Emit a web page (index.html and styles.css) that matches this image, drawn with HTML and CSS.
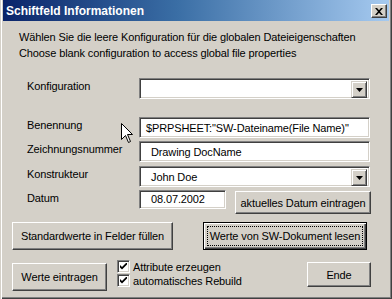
FILE: index.html
```html
<!DOCTYPE html>
<html lang="de">
<head>
<meta charset="utf-8">
<title>Schiftfeld Informationen</title>
<link rel="stylesheet" href="styles.css">
</head>
<body>
<div class="window">
  <div class="titlebar">
    <span class="title">Schiftfeld Informationen</span>
    <span class="close"><svg width="8" height="7" viewBox="0 0 8 7"><path d="M0 0h2l2 2.2L6 0h2L5 3.5 8 7H6L4 4.8 2 7H0l3-3.5z" fill="#000"/></svg></span>
  </div>
  <div class="content">
    <p class="intro">Wählen Sie die leere Konfiguration für die globalen Dateieigenschaften<br>Choose blank configuration to access global file properties</p>

    <div class="row row-konf">
      <span class="lbl">Konfiguration</span>
      <div class="field combo"><span class="val"></span><span class="ddbtn"><svg width="7" height="4" viewBox="0 0 7 4"><path d="M0 0h7L3.5 4z" fill="#000"/></svg></span></div>
    </div>

    <div class="row row-ben">
      <span class="lbl">Benennung</span>
      <div class="field text first">$PRPSHEET:"SW-Dateiname(File Name)"</div>
    </div>

    <div class="row row-zei">
      <span class="lbl">Zeichnungsnummer</span>
      <div class="field text">Drawing DocName</div>
    </div>

    <div class="row row-kon">
      <span class="lbl">Konstrukteur</span>
      <div class="field combo"><span class="val">John Doe</span><span class="ddbtn"><svg width="7" height="4" viewBox="0 0 7 4"><path d="M0 0h7L3.5 4z" fill="#000"/></svg></span></div>
    </div>

    <div class="row row-dat">
      <span class="lbl">Datum</span>
      <div class="field text date">08.07.2002</div>
      <button class="btn btn-date">aktuelles Datum eintragen</button>
    </div>

    <div class="btnrow1">
      <button class="btn btn-std">Standardwerte in Felder füllen</button>
      <div class="btn btn-default"><span class="focus">Werte von SW-Dokument lesen</span></div>
    </div>

    <div class="btnrow2">
      <button class="btn btn-werte">Werte eintragen</button>
      <div class="checks">
        <div class="chk"><span class="box"><svg width="7" height="7" viewBox="0 0 7 7"><path d="M0 2l2 2 5-5v2.5L2 6.5 0 4.5z" fill="#000"/></svg></span><span>Attribute erzeugen</span></div>
        <div class="chk"><span class="box"><svg width="7" height="7" viewBox="0 0 7 7"><path d="M0 2l2 2 5-5v2.5L2 6.5 0 4.5z" fill="#000"/></svg></span><span>automatisches Rebuild</span></div>
      </div>
      <button class="btn btn-ende">Ende</button>
    </div>
  </div>
  <svg class="cursor" width="13" height="21" viewBox="0 0 13 21"><path d="M0.5 0.5V16.5L4.5 12.5L7.5 19.5L9.5 18.5L6.5 11.5H11.5Z" fill="#fff" stroke="#000" stroke-width="1" stroke-linejoin="miter"/></svg>
</div>
</body>
</html>
```

FILE: styles.css
```css
* { box-sizing: border-box; }
html, body { margin: 0; padding: 0; background: #d4d0c8; }
body {
  font-family: "Liberation Sans", Arial, sans-serif;
  font-size: 11px;
  color: #000;
}
.window {
  position: relative;
  width: 392px;
  height: 299px;
  background: #d4d0c8;
  padding: 0 3px 3px 3px;
  box-shadow: inset 1px 0 #d4d0c8, inset 2px 0 #fff, inset -1px -1px #404040, inset -2px -2px #808080;
  overflow: hidden;
}
.titlebar {
  height: 21px;
  display: flex;
  align-items: center;
  justify-content: space-between;
  padding: 0 2px 0 3px;
  background: linear-gradient(to right, #0a246a, #3a6ea5 45%, #a6caf0);
}
.title {
  color: #fff;
  font-weight: bold;
  font-size: 12px;
  line-height: 21px;
  padding-top: 1px;
}
.close {
  width: 16px;
  height: 14px;
  margin-top: 1px;
  background: #d4d0c8;
  border: 1px solid;
  border-color: #fff #404040 #404040 #fff;
  box-shadow: inset -1px -1px #808080;
  display: flex;
  align-items: center;
  justify-content: center;
}
.content { letter-spacing: -0.12px; }
.intro {
  margin: 8px 0 0 16px;
  line-height: 16px;
}
.row {
  display: flex;
  align-items: flex-start;
  padding-left: 24px;
}
.lbl {
  width: 112px;
  line-height: 17px;
  flex: none;
}
.row-konf { margin-top: 17px; }
.row-ben { margin-top: 18px; }
.row-zei { margin-top: 3px; }
.row-kon { margin-top: 4px; }
.row-dat { margin-top: 3px; }
.field {
  width: 231px;
  height: 21px;
  background: #fff;
  border: 1px solid;
  border-color: #808080 #fff #fff #808080;
  box-shadow: inset 1px 1px #404040, inset -1px -1px #d4d0c8;
  flex: none;
}
.text {
  padding: 0 0 0 11px;
  line-height: 20px;
  white-space: nowrap;
  overflow: hidden;
}
.text.first { padding-left: 6px; }
.combo {
  display: flex;
  padding: 2px;
}
.combo .val {
  flex: 1;
  padding-left: 9px;
  line-height: 16px;
}
.ddbtn {
  width: 16px;
  height: 17px;
  background: #d4d0c8;
  border: 1px solid;
  border-color: #d4d0c8 #404040 #404040 #d4d0c8;
  box-shadow: inset 1px 1px #fff, inset -1px -1px #808080;
  display: flex;
  align-items: center;
  justify-content: center;
}
.date {
  width: 87px;
  height: 19px;
  line-height: 17px;
}
.btn {
  font-family: inherit;
  font-size: 11px;
  letter-spacing: -0.12px;
  color: #000;
  background: #d4d0c8;
  border: 1px solid;
  border-color: #fff #404040 #404040 #fff;
  box-shadow: inset -1px -1px #808080;
  padding: 0;
  margin: 0;
  flex: none;
  white-space: nowrap;
}
.btn-date {
  width: 136px;
  height: 23px;
  margin: 1px 0 0 9px;
}
.btnrow1 {
  display: flex;
  margin: 8px 0 0 9px;
}
.btn-std { width: 161px; height: 28px; }
.btn-default {
  width: 164px;
  height: 28px;
  margin-left: 30px;
  border: 1px solid #000;
  box-shadow: inset 1px 1px #fff, inset -1px -1px #404040, inset -2px -2px #808080;
  padding: 3px;
  display: flex;
}
.focus {
  flex: 1;
  border: 1px dotted #000;
  display: flex;
  align-items: center;
  justify-content: center;
}
.btnrow2 {
  display: flex;
  align-items: flex-start;
  margin: 10px 0 0 9px;
}
.btn-werte { width: 95px; height: 28px; margin-top: 3px; }
.checks {
  margin-left: 10px;
  display: flex;
  flex-direction: column;
  gap: 1px;
}
.chk {
  display: flex;
  align-items: center;
  gap: 3px;
  height: 13px;
}
.box {
  width: 13px;
  height: 13px;
  background: #fff;
  border: 1px solid;
  border-color: #808080 #fff #fff #808080;
  box-shadow: inset 1px 1px #404040, inset -1px -1px #d4d0c8;
  display: flex;
  align-items: center;
  justify-content: center;
}
.btn-ende {
  width: 64px;
  height: 25px;
  margin: 2px 0 0 auto;
  margin-right: 18px;
}
.cursor {
  position: absolute;
  left: 121px;
  top: 123px;
}
```
